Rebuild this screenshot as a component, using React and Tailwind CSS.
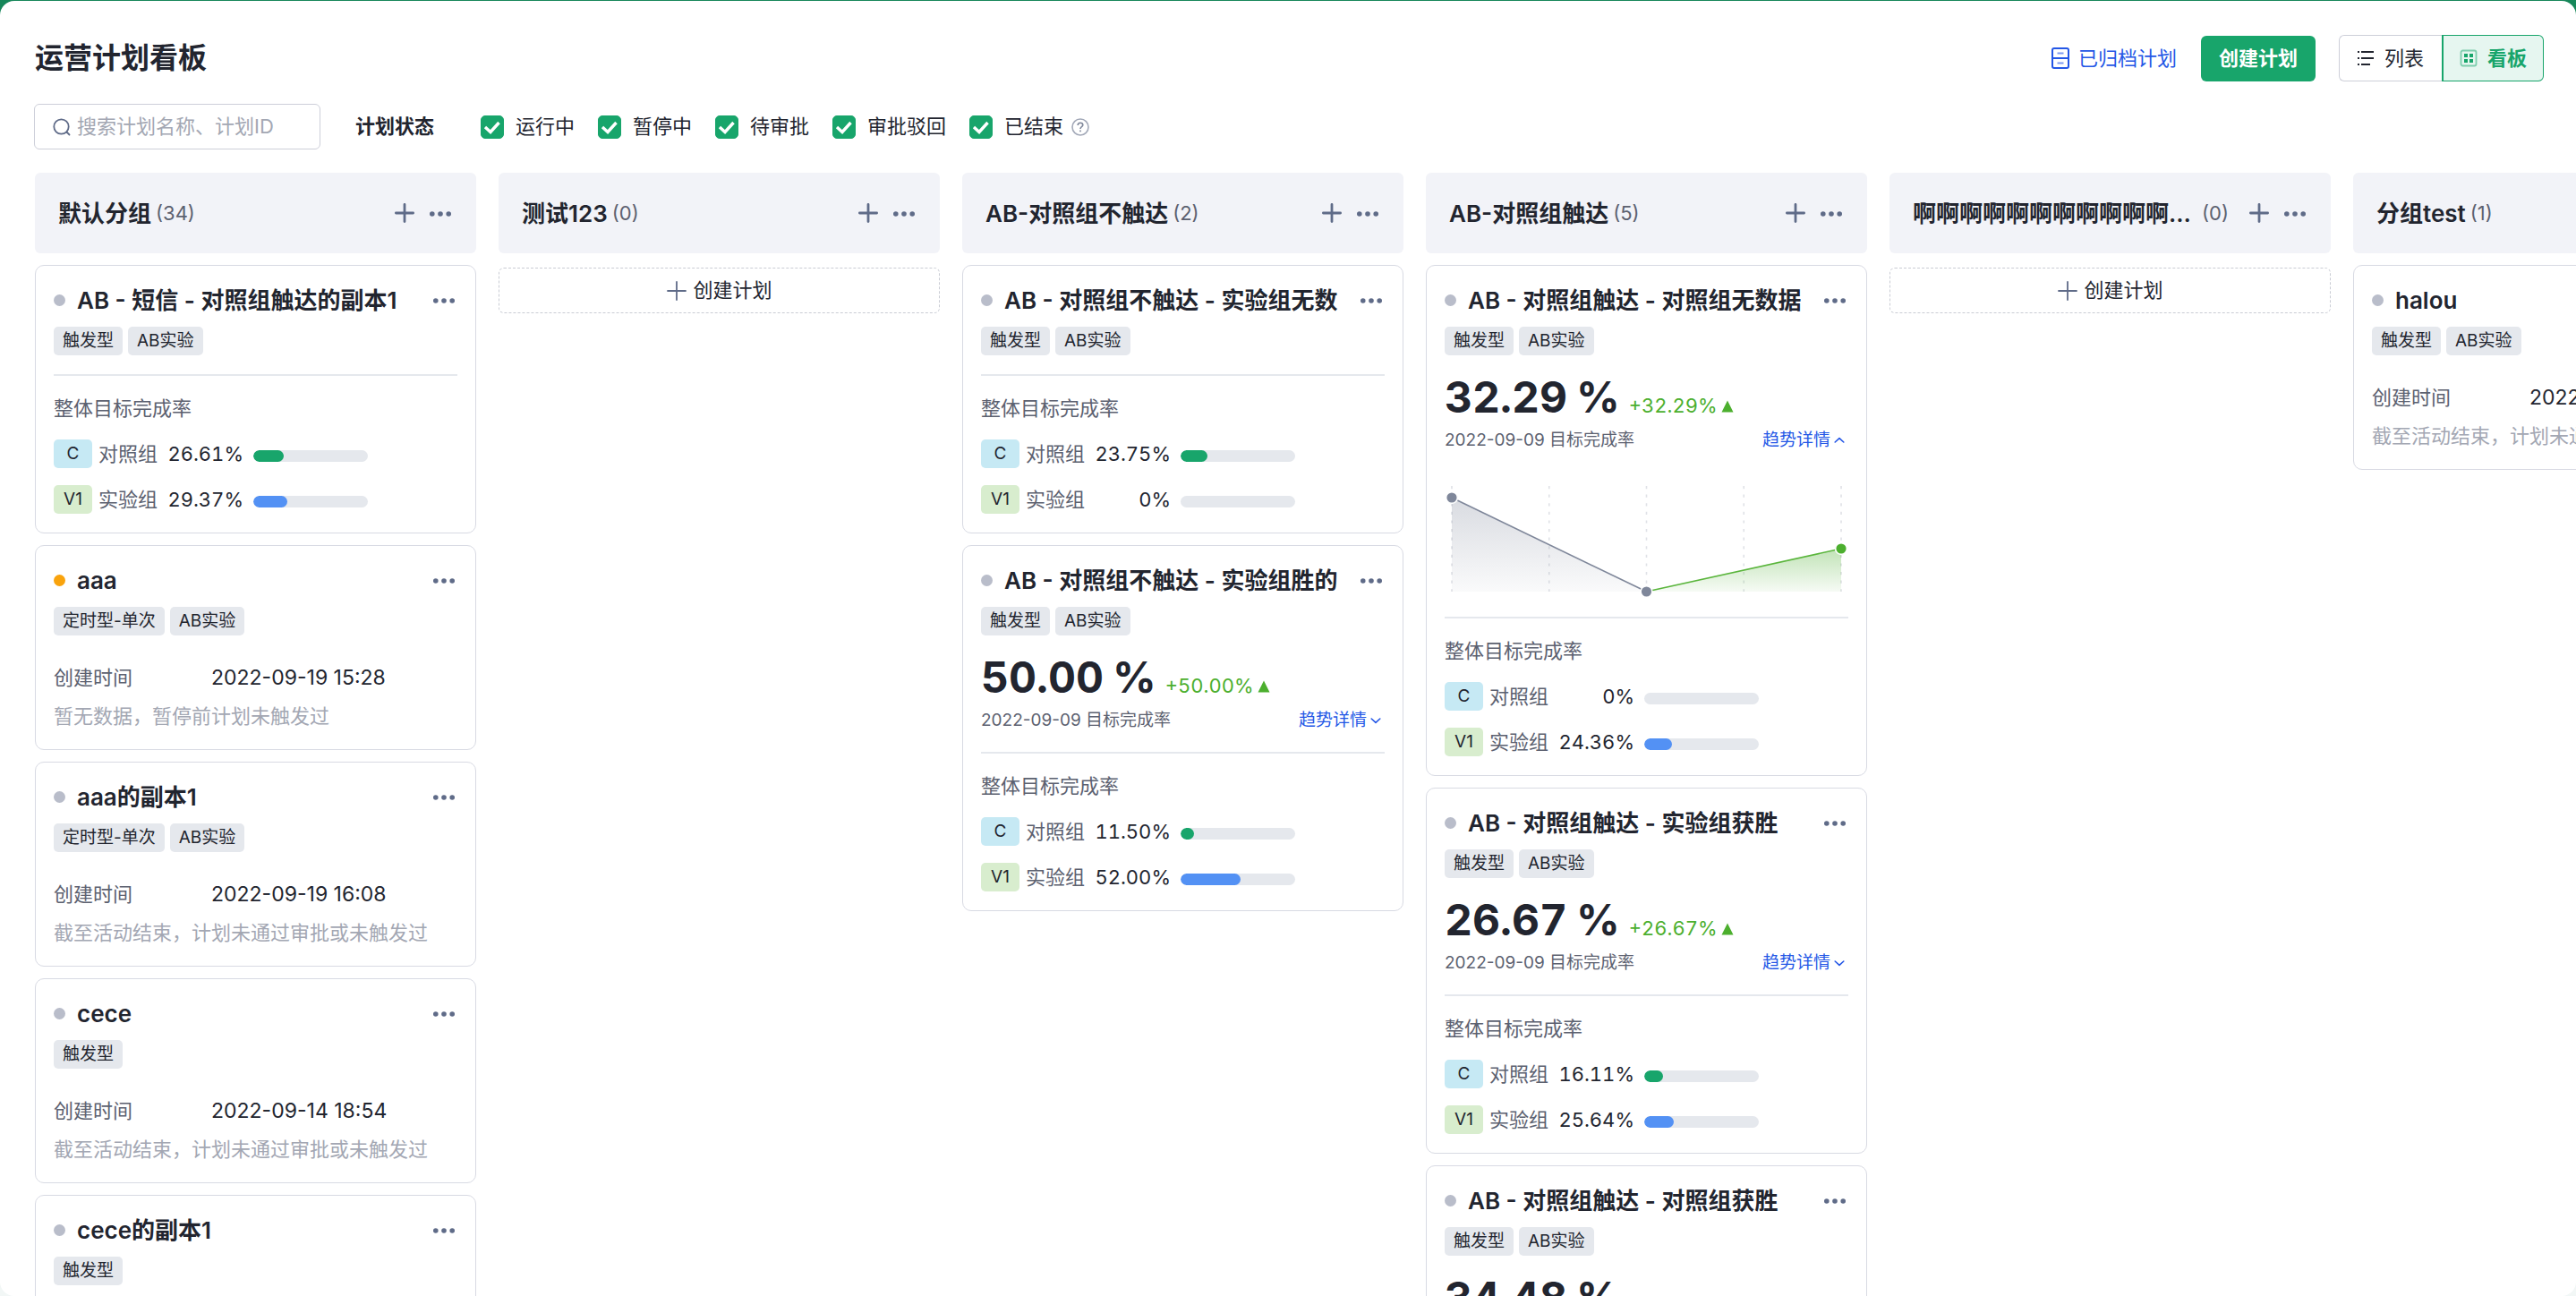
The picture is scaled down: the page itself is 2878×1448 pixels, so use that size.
import React from "react";

const AB = ["触发型", "AB实验"];
const TIMED = ["定时型-单次", "AB实验"];
const ENDED = "截至活动结束，计划未通过审批或未触发过";

const columns = [
  {
    name: "默认分组",
    count: 34,
    cards: [
      { title: "AB - 短信 - 对照组触达的副本1", tags: AB, c: 26.61, v: 29.37 },
      { title: "aaa", tags: TIMED, paused: true, created: "2022-09-19 15:28", note: "暂无数据，暂停前计划未触发过" },
      { title: "aaa的副本1", tags: TIMED, created: "2022-09-19 16:08", note: ENDED },
      { title: "cece", tags: ["触发型"], created: "2022-09-14 18:54", note: ENDED },
      { title: "cece的副本1", tags: ["触发型"], created: "2022-09-14 18:54", note: ENDED },
    ],
  },
  { name: "测试123", count: 0, cards: [] },
  {
    name: "AB-对照组不触达",
    count: 2,
    cards: [
      { title: "AB - 对照组不触达 - 实验组无数", tags: AB, c: 23.75, v: 0 },
      { title: "AB - 对照组不触达 - 实验组胜的", tags: AB, rate: "50.00", c: 11.5, v: 52 },
    ],
  },
  {
    name: "AB-对照组触达",
    count: 5,
    cards: [
      { title: "AB - 对照组触达 - 对照组无数据", tags: AB, rate: "32.29", open: true, c: 0, v: 24.36 },
      { title: "AB - 对照组触达 - 实验组获胜", tags: AB, rate: "26.67", c: 16.11, v: 25.64 },
      { title: "AB - 对照组触达 - 对照组获胜", tags: AB, rate: "34.48", c: 30.12, v: 34.48 },
    ],
  },
  { name: "啊啊啊啊啊啊啊啊啊啊啊啊啊", count: 0, cards: [] },
  {
    name: "分组test",
    count: 1,
    cards: [{ title: "halou", tags: AB, created: "2022-09-09 11:20", note: ENDED }],
  },
];

const statuses = ["运行中", "暂停中", "待审批", "审批驳回", "已结束"];

function Dots() {
  return (
    <svg className="block h-6 w-6" viewBox="0 0 24 24" fill="#5f6b88" aria-hidden="true">
      <circle cx="2.8" cy="13" r="2.8" />
      <circle cx="12" cy="13" r="2.8" />
      <circle cx="21.2" cy="13" r="2.8" />
    </svg>
  );
}

function Plus({ thin }) {
  return (
    <svg className="block h-6 w-6" viewBox="0 0 24 24" fill="none" stroke="#5f6b88" strokeWidth={thin ? 1.8 : 2.8} strokeLinecap="round" aria-hidden="true">
      <path d={thin ? "M2 12H22M12 2V22" : "M2.4 12H21.6M12 2.4V21.6"} />
    </svg>
  );
}

function Chevron({ up }) {
  return (
    <svg className="block h-3 w-3" viewBox="0 0 12 12" fill="none" stroke="#2457e6" strokeWidth="1.6" strokeLinecap="round" strokeLinejoin="round" aria-hidden="true">
      <path d={up ? "M1.2 8L6 3.6L10.8 8" : "M1.2 4L6 8.4L10.8 4"} />
    </svg>
  );
}

function Trend() {
  return (
    <svg className="mt-[31px] block h-[136px] w-full" viewBox="0 0 452 136" preserveAspectRatio="none" role="img" aria-label="趋势">
      <defs>
        <linearGradient id="grayFill" x1="0" y1="0" x2="0" y2="1">
          <stop offset="0" stopColor="#7f879a" stopOpacity="0.3" />
          <stop offset="1" stopColor="#7f879a" stopOpacity="0.04" />
        </linearGradient>
        <linearGradient id="greenFill" x1="0" y1="0" x2="0" y2="1">
          <stop offset="0" stopColor="#4caf2e" stopOpacity="0.35" />
          <stop offset="1" stopColor="#4caf2e" stopOpacity="0.05" />
        </linearGradient>
      </defs>
      {[8, 117, 226, 335, 444].map((x) => (
        <path key={x} d={`M${x} 6V124`} stroke="#dfe1e6" strokeWidth="1.6" strokeDasharray="3.2 6.4" />
      ))}
      <path d="M8 19L226 124H8Z" fill="url(#grayFill)" />
      <path d="M226 124L444 76V124Z" fill="url(#greenFill)" />
      <path d="M8 19L226 124" stroke="#7f879a" strokeWidth="1.6" />
      <path d="M226 124L444 76" stroke="#5ab53c" strokeWidth="1.6" />
      <circle cx="8" cy="19" r="6.4" fill="#7f879a" stroke="#fff" strokeWidth="1.6" />
      <circle cx="226" cy="124" r="6.4" fill="#7f879a" stroke="#fff" strokeWidth="1.6" />
      <circle cx="444" cy="76" r="6.4" fill="#4caf2e" stroke="#fff" strokeWidth="1.6" />
    </svg>
  );
}

function Rate({ code, label, value, codeClass, barClass }) {
  return (
    <div className="flex h-8 items-center">
      <span className={`flex h-8 w-[43px] items-center justify-center rounded-[5px] text-[19px] ${codeClass}`}>{code}</span>
      <span className="ml-[7px] w-[67px] text-[22px] text-[#5c6170]">{label}</span>
      <span className="w-[95px] text-right text-[22px] tabular-nums">{value ? value.toFixed(2) : "0"}%</span>
      <span className="ml-[11px] mt-[5px] block h-[13px] w-32 overflow-hidden rounded-full bg-[#e5e8ed]">
        <span className={`block h-full rounded-full ${barClass}`} style={{ width: `${value}%` }} />
      </span>
    </div>
  );
}

function Card({ card }) {
  return (
    <article className="rounded-[10px] border border-[#d8dae3] px-5 pb-[21px] pt-[19px]">
      <div className="flex h-[38px] items-center">
        <span className={`size-[13px] shrink-0 rounded-full ${card.paused ? "bg-[#f9a30c]" : "bg-[#b9bdca]"}`} />
        <h3 className="ml-[13px] flex-1 overflow-hidden whitespace-nowrap text-[26px] font-semibold">{card.title}</h3>
        <button type="button" aria-label="更多" className="ml-4 mr-[3px] shrink-0"><Dots /></button>
      </div>
      <div className="mt-[11px] flex gap-[6px]">
        {card.tags.map((t) => (
          <span key={t} className="flex h-8 items-center rounded-[5px] bg-[#e5e8ed] px-[10px] text-[19px]">{t}</span>
        ))}
      </div>
      {card.rate && (
        <>
          <div className="mt-6 flex h-[45px] items-baseline tabular-nums">
            <span className="flex gap-[10px] text-[48px] font-bold leading-[45px]">
              <span>{card.rate}</span>
              <span>%</span>
            </span>
            <span className="ml-[10px] text-[22px] leading-8 text-[#4caf2e]">+{card.rate}%</span>
            <svg className="mb-[3px] ml-1 block size-[14px]" viewBox="0 0 14 14" fill="#4caf2e" aria-hidden="true"><path d="M7 0.5L13.5 13.5H0.5Z" /></svg>
          </div>
          <div className="mt-3 flex h-7 items-center justify-between text-[19px]">
            <span className="text-[#5c6170]">2022-09-09 目标完成率</span>
            <button type="button" aria-expanded={!!card.open} className="mr-1 flex items-center gap-1 text-[#2457e6]">
              趋势详情
              <Chevron up={card.open} />
            </button>
          </div>
        </>
      )}
      {card.open && <Trend />}
      {card.created ? (
        <div>
          <div className="mt-[31px] flex h-8 items-center text-[22px]">
            <span className="w-[176px] text-[#5c6170]">创建时间</span>
            <span className="whitespace-nowrap text-[23px]">{card.created}</span>
          </div>
          <p className="mt-[11px] h-8 whitespace-nowrap text-[22px] leading-8 text-[#a3a7b3]">{card.note}</p>
        </div>
      ) : (
        <div className={card.open ? "mt-4" : "mt-[21px]"}>
          <div className="border-t-2 border-[#e5e8ed] pt-5">
            <p className="h-8 text-[22px] leading-8 text-[#5c6170]">整体目标完成率</p>
            <div className="mt-[19px] flex flex-col gap-[19px]">
              <Rate code="C" label="对照组" value={card.c} codeClass="bg-[#c6e9f4]" barClass="bg-[#18a56b]" />
              <Rate code="V1" label="实验组" value={card.v} codeClass="bg-[#d8edce]" barClass="bg-[#5391f4]" />
            </div>
          </div>
        </div>
      )}
    </article>
  );
}

function Column({ column }) {
  return (
    <section className="w-[493px] shrink-0">
      <header className="flex h-[90px] items-center rounded-md bg-[#f2f3f8] pl-[26px] pr-[28px]">
        <div className="flex min-w-0 flex-1 items-center">
          <h2 className="truncate text-[26px] font-semibold">{column.name}</h2>
          <span className="ml-[5px] text-[22px] text-[#5c6170]">({column.count})</span>
        </div>
        <button type="button" aria-label="新建计划" className="ml-[22px]"><Plus /></button>
        <button type="button" aria-label="更多" className="ml-4"><Dots /></button>
      </header>
      {column.cards.length ? (
        <div className="mt-[13px] flex flex-col gap-[13px]">
          {column.cards.map((c) => <Card key={c.title} card={c} />)}
        </div>
      ) : (
        <button type="button" className="mt-4 flex h-[51px] w-full items-center justify-center gap-[6px] rounded-md border border-dashed border-[#c9ccd4] text-[22px]">
          <Plus thin />
          创建计划
        </button>
      )}
    </section>
  );
}

export default function App() {
  return (
    <div className="h-screen overflow-hidden bg-[linear-gradient(#17875a_0,#17875a_50%,#f2f7f6_50%)] pt-px font-['Inter','Noto_Sans_CJK_SC',sans-serif] text-[#22252f]">
      <main className="h-full overflow-hidden rounded-2xl bg-white pt-[38px]">
        <div className="flex h-[52px] items-center pl-[39px] pr-9">
          <h1 className="flex-1 text-[32px] font-semibold">运营计划看板</h1>
          <a href="#archived" className="flex items-center gap-[9px] text-[22px] text-[#2457e6]">
            <svg className="block h-6 w-[22px]" viewBox="0 0 22 24" fill="none" stroke="#2457e6" strokeWidth="2" aria-hidden="true">
              <rect x="2" y="1" width="18" height="22" rx="2" />
              <path d="M2 12H20" />
              <path d="M7.5 6.5H14.5M7.5 17.5H14.5" opacity="0.6" />
            </svg>
            已归档计划
          </a>
          <button type="button" className="ml-[27px] h-[51px] rounded-md bg-[#18a56b] px-5 text-[22px] font-semibold text-white">创建计划</button>
          <div className="ml-[26px] flex h-[52px] text-[22px]">
            <button type="button" className="flex items-center gap-[11px] rounded-l-md border border-r-0 border-[#cdcfd9] pl-[19px] pr-5">
              <svg className="block h-5 w-5" viewBox="0 0 20 20" fill="none" stroke="#22252f" strokeWidth="2" aria-hidden="true">
                <path d="M5 3H19M5 10H19M5 17H15" />
                <path d="M1 3H3M1 10H3M1 17H3" />
              </svg>
              列表
            </button>
            <button type="button" aria-pressed="true" className="flex items-center gap-[11px] rounded-r-md border border-l-2 border-[#18a56b] bg-[#e6f6f0] px-[18px] font-semibold text-[#18a56b]">
              <svg className="block h-5 w-5" viewBox="0 0 20 20" aria-hidden="true">
                <rect x="1.5" y="1.5" width="17" height="17" rx="2" fill="none" stroke="#18a56b" strokeOpacity="0.5" strokeWidth="1.8" />
                <path d="M5 5H9V9H5ZM11 5H15V9H11ZM5 11H9V15H5ZM11 11H15V15H11Z" fill="#18a56b" />
              </svg>
              看板
            </button>
          </div>
        </div>

        <div className="mt-[25px] flex h-[51px] items-center px-[38px] text-[22px]">
          <label className="flex h-[51px] w-80 items-center rounded-md border border-[#cdcfd9] pl-[20px]">
            <svg className="block h-5 w-5 shrink-0" viewBox="0 0 20 20" fill="none" stroke="#5f6b88" strokeWidth="1.8" strokeLinecap="round" aria-hidden="true">
              <circle cx="9.5" cy="9.5" r="8.2" />
              <path d="M15.5 15.5L18.5 18.5" />
            </svg>
            <input type="text" aria-label="搜索计划" placeholder="搜索计划名称、计划ID" className="ml-[7px] w-full min-w-0 bg-transparent outline-none placeholder:text-[#a3a7b3]" />
          </label>
          <span className="ml-[39px] font-semibold">计划状态</span>
          <div className="ml-[52px] flex items-center gap-[26px]">
            {statuses.map((s) => (
              <label key={s} className="flex items-center">
                <span className="grid size-[26px]">
                  <input type="checkbox" defaultChecked className="peer col-start-1 row-start-1 size-[26px] appearance-none rounded-[5px] border border-[#cdcfd9] checked:border-[#18a56b] checked:bg-[#18a56b]" />
                  <svg className="pointer-events-none col-start-1 row-start-1 size-[26px] opacity-0 peer-checked:opacity-100" viewBox="0 0 26 26" fill="none" stroke="#fff" strokeWidth="3.4" aria-hidden="true">
                    <path d="M5 13L11 18.5L20.5 8" />
                  </svg>
                </span>
                <span className="ml-[13px]">{s}</span>
              </label>
            ))}
          </div>
          <svg className="ml-[9px] block h-5 w-5" viewBox="0 0 20 20" fill="none" stroke="#a3a9b8" strokeWidth="1.6" aria-hidden="true">
            <circle cx="10" cy="10" r="9" />
            <path d="M7.2 8C7.2 6.3 8.4 5.3 10 5.3S12.8 6.3 12.8 7.8C12.8 9.7 10 9.8 10 12M10 13.6V15.2" stroke="#7f879a" />
          </svg>
        </div>

        <div className="mt-[26px] flex gap-[25px] pl-[39px]">
          {columns.map((c) => <Column key={c.name} column={c} />)}
        </div>
      </main>
    </div>
  );
}
